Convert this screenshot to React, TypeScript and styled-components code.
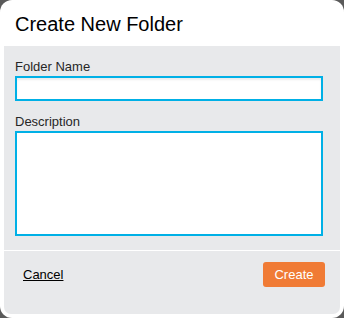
import React from "react";
import styled, { createGlobalStyle } from "styled-components";

const Global = createGlobalStyle`
  html, body { margin: 0; padding: 0; background: #5a5a5a; }
  body { font-family: "Liberation Sans", Arial, sans-serif; }
  * { box-sizing: border-box; }
`;

const Dialog = styled.div`
  width: 344px;
  height: 318px;
  background: #ffffff;
  border-radius: 12px;
  padding: 0 4px 4px 4px;
  display: flex;
  flex-direction: column;
`;

const Title = styled.h1`
  margin: 0;
  padding: 14px 0 0 11px;
  height: 46px;
  font-size: 20px;
  line-height: 20px;
  font-weight: normal;
  color: #000;
`;

const Panel = styled.div`
  flex: 1;
  background: #e8e9eb;
  border-radius: 0 0 7px 7px;
  display: flex;
  flex-direction: column;
`;

const Form = styled.div`
  padding: 13px 17px 14px 11px;
  border-bottom: 1px solid #ffffff;
  display: flex;
  flex-direction: column;
`;

const Label = styled.label<{ $top?: number }>`
  display: block;
  font-size: 13px;
  line-height: 15px;
  color: #262626;
  margin-top: ${(p) => p.$top ?? 0}px;
  margin-bottom: 2px;
`;

const TextInput = styled.input`
  display: block;
  width: 100%;
  height: 25px;
  margin: 0;
  border: 2px solid #00b0e6;
  background: #fff;
  box-shadow: inset 0 2px 2px rgba(0, 0, 0, 0.08);
  outline: none;
  padding: 0 4px;
  font: inherit;
`;

const TextArea = styled.textarea`
  display: block;
  width: 100%;
  height: 105px;
  margin: 0;
  border: 2px solid #00b0e6;
  background: #fff;
  outline: none;
  resize: none;
  padding: 4px;
  font: inherit;
`;

const Footer = styled.div`
  flex: 1;
  display: flex;
  align-items: flex-start;
  justify-content: space-between;
  padding: 11px 15px 0 19px;
`;

const CancelLink = styled.a`
  font-size: 13px;
  line-height: 25px;
  color: #000;
  text-decoration: underline;
  cursor: pointer;
`;

const CreateButton = styled.button`
  width: 62px;
  height: 25px;
  border: none;
  border-radius: 3px;
  background: #f07b35;
  color: #fff;
  font-family: "Liberation Sans", Arial, sans-serif;
  font-size: 13px;
  padding: 0;
  cursor: pointer;
`;

export default function App() {
  return (
    <>
      <Global />
      <Dialog>
        <Title>Create New Folder</Title>
        <Panel>
          <Form>
            <Label>Folder Name</Label>
            <TextInput type="text" />
            <Label $top={13}>Description</Label>
            <TextArea />
          </Form>
          <Footer>
            <CancelLink>Cancel</CancelLink>
            <CreateButton>Create</CreateButton>
          </Footer>
        </Panel>
      </Dialog>
    </>
  );
}
